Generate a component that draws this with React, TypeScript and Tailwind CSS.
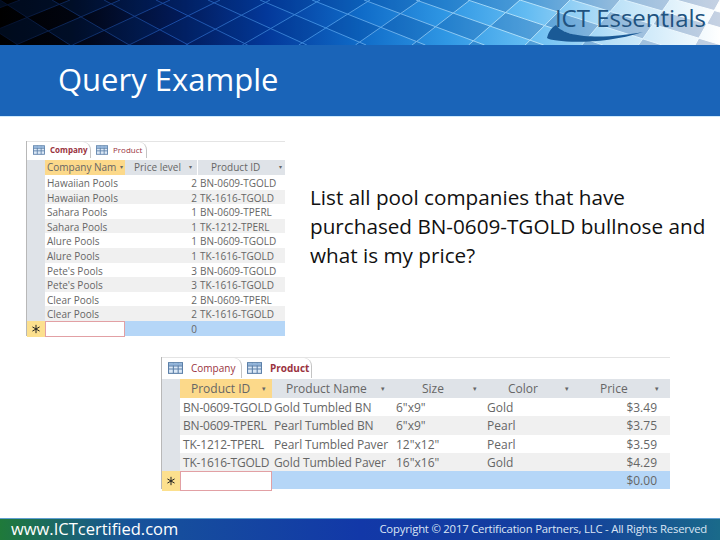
import React from "react";

// Two fanned families of grid lines; each line is x = top + (y / 45) * slant
const famA: [number, number][] = [];
for (let i = -6; i < 24; i++) {
  const t = i * 52;
  const r = Math.max(0, Math.min(1, t / 720));
  famA.push([t, 70 + r * 100]);
}
const famB: [number, number][] = [];
for (let i = -2; i < 30; i++) {
  const t = i * 50 + 20;
  const r = Math.max(0, Math.min(1, t / 720));
  famB.push([t, -120 + r * 95]);
}
const meet = (a: [number, number], b: [number, number]): [number, number] => {
  const y = ((b[0] - a[0]) / (a[1] - b[1])) * 45;
  return [a[0] + (y / 45) * a[1], y];
};
const linePath = [...famA, ...famB].map(([t, d]) => `M${t} 0 L${t + d} 45`).join(" ");
let cellPath = "";
for (let i = 0; i < famA.length - 1; i++) {
  for (let j = 0; j < famB.length - 1; j++) {
    if ((i + j) % 2) continue;
    const p = [meet(famA[i], famB[j]), meet(famA[i + 1], famB[j]), meet(famA[i + 1], famB[j + 1]), meet(famA[i], famB[j + 1])];
    cellPath += "M" + p.map((q) => `${q[0].toFixed(1)} ${q[1].toFixed(1)}`).join("L") + "Z";
  }
}

function Banner() {
  return (
    <div className="relative h-[45px] w-full overflow-hidden">
      <svg viewBox="0 0 720 45" className="block h-[45px] w-[720px]">
        <defs>
          <linearGradient id="bg" x1="0" y1="0" x2="720" y2="0" gradientUnits="userSpaceOnUse">
            <stop offset="0" stopColor="#000000" />
            <stop offset="0.1" stopColor="#01040f" />
            <stop offset="0.25" stopColor="#021a58" />
            <stop offset="0.37" stopColor="#03389a" />
            <stop offset="0.5" stopColor="#0f6bc8" />
            <stop offset="0.62" stopColor="#2f97e4" />
            <stop offset="0.73" stopColor="#62bbf2" />
            <stop offset="0.85" stopColor="#b9e0f7" />
            <stop offset="1" stopColor="#ffffff" />
          </linearGradient>
          <linearGradient id="ln" x1="0" y1="0" x2="720" y2="0" gradientUnits="userSpaceOnUse">
            <stop offset="0" stopColor="#040f28" />
            <stop offset="0.25" stopColor="#1a4ca6" />
            <stop offset="0.45" stopColor="#3f8fe0" />
            <stop offset="0.7" stopColor="#a8dcf8" />
            <stop offset="1" stopColor="#ffffff" />
          </linearGradient>
        </defs>
        <rect width="720" height="45" fill="url(#bg)" />
        <path d={cellPath} fill="#00307f" fillOpacity="0.22" />
        <path d={linePath} stroke="url(#ln)" strokeWidth="1" fill="none" />
        <path d="M547 38 C552 42 600 46 643 32 C612 38 566 40 556 25 C551 28 548 33 547 38 Z" fill="#1a5a96" />
      </svg>
      <div className="absolute right-[14px] top-0 font-['Open_Sans',sans-serif] text-[24px] leading-[36px] text-[#20527f]">
        ICT Essentials
      </div>
    </div>
  );
}

function GridIcon({ big }: { big?: boolean }) {
  return (
    <svg viewBox="0 0 14 11" className={big ? "h-[12px] w-[15px] shrink-0" : "h-[10px] w-[12px] shrink-0"}>
      <rect x="0.5" y="0.5" width="13" height="10" fill="#dbe8f6" stroke="#5b7fa8" />
      <path d="M0.5 3.5H13.5M0.5 6.5H13.5M5 0.5V10.5M9.5 0.5V10.5" stroke="#5b7fa8" />
      <rect x="1" y="1" width="12" height="2" fill="#8fb2d8" />
    </svg>
  );
}

function Star() {
  return (
    <svg viewBox="0 0 12 12" className="h-[10px] w-[10px]">
      <path d="M6 1V11M1.7 3.5L10.3 8.5M1.7 8.5L10.3 3.5" stroke="#222" strokeWidth="1.2" />
    </svg>
  );
}

function Tabs({ names, active, big }: { names: string[]; active: number; big?: boolean }) {
  const widths = big ? ["w-[79px]", "w-[70px]"] : ["w-[63px]", "w-[56px]"];
  return (
    <div className={big ? "flex h-[22px] items-start border-t border-[#e4e4e4] pl-[1px] text-[10px]" : "flex h-[19px] items-start border-t border-[#e4e4e4] pl-[1px] text-[8px]"}>
      {names.map((n, i) => (
        <div
          key={n}
          className={
            widths[i] +
            (big ? " h-[20px] gap-[8px] pl-[5px] " : " h-[16px] gap-[5px] pl-[5px] ") +
            "flex items-center whitespace-nowrap rounded-tr-[8px] border-r border-[#c4c4c4] text-[#9a3340]" +
            (i === active ? " font-bold" : "")
          }
        >
          <GridIcon big={big} />
          {n}
        </div>
      ))}
    </div>
  );
}

function Table1() {
  const cols = "grid-cols-[18px_80px_73px_87px]";
  const rows: [string, string, string][] = [
    ["Hawaiian Pools", "2", "BN-0609-TGOLD"],
    ["Hawaiian Pools", "2", "TK-1616-TGOLD"],
    ["Sahara Pools", "1", "BN-0609-TPERL"],
    ["Sahara Pools", "1", "TK-1212-TPERL"],
    ["Alure Pools", "1", "BN-0609-TGOLD"],
    ["Alure Pools", "1", "TK-1616-TGOLD"],
    ["Pete's Pools", "3", "BN-0609-TGOLD"],
    ["Pete's Pools", "3", "TK-1616-TGOLD"],
    ["Clear Pools", "2", "BN-0609-TPERL"],
    ["Clear Pools", "2", "TK-1616-TGOLD"],
  ];
  return (
    <div className="h-fit w-[259px] border-l border-[#b8b8b8] font-['Open_Sans',sans-serif] text-[10px] text-[#666]">
      <Tabs names={["Company", "Product"]} active={0} />
      <div className={"grid h-[15px] whitespace-nowrap bg-[#dfe3e8] leading-[15px] " + cols}>
        <div />
        <div className="flex items-center justify-between bg-[#fcd98a] px-[2px]">Company Nam <span className="text-[6px]">▾</span></div>
        <div className="flex items-center justify-between border-r border-white pl-[9px] pr-[5px]">Price level <span className="text-[6px]">▾</span></div>
        <div className="flex items-center justify-between pl-[13px] pr-[3px]">Product ID <span className="text-[6px]">▾</span></div>
      </div>
      {rows.map((r, i) => (
        <div
          key={i}
          className={
            "grid h-[14.6px] whitespace-nowrap leading-[16px] " + cols + " " +
            (i % 2 ? "bg-[#f0f0f0]" : "bg-white")
          }
        >
          <div className="border-b border-[#b9bec5] bg-[#dfe3e8]" />
          <div className="px-[2px]">{r[0]}</div>
          <div className="pr-[1px] text-right">{r[1]}</div>
          <div className="pl-[2px]">{r[2]}</div>
        </div>
      ))}
      <div className={"grid h-[15px] bg-[#b5d6f7] leading-[16px] " + cols}>
        <div className="flex items-center justify-center bg-[#fce08e]"><Star /></div>
        <div className="border border-[#e2a0a4] bg-white" />
        <div className="pr-[1px] text-right">0</div>
        <div />
      </div>
    </div>
  );
}

function Table2() {
  const cols = "grid-cols-[18px_92px_123px_90px_100px_85px]";
  const rows: [string, string, string, string, string][] = [
    ["BN-0609-TGOLD", "Gold Tumbled BN", '6"x9"', "Gold", "$3.49"],
    ["BN-0609-TPERL", "Pearl Tumbled BN", '6"x9"', "Pearl", "$3.75"],
    ["TK-1212-TPERL", "Pearl Tumbled Paver", '12"x12"', "Pearl", "$3.59"],
    ["TK-1616-TGOLD", "Gold Tumbled Paver", '16"x16"', "Gold", "$4.29"],
  ];
  return (
    <div className="h-fit w-[509px] border-l border-[#b8b8b8] font-['Open_Sans',sans-serif] text-[12px] text-[#666]">
      <Tabs names={["Company", "Product"]} active={1} big />
      <div className={"grid h-[19px] whitespace-nowrap bg-[#dfe3e8] leading-[19px] " + cols}>
        <div />
        <div className="flex items-center justify-between bg-[#fcd98a] pl-[11px] pr-[6px]">Product ID <span className="text-[7px]">▾</span></div>
        <div className="flex items-center justify-between pl-[14px] pr-[10px]">Product Name <span className="text-[7px]">▾</span></div>
        <div className="flex items-center justify-between pl-[27px] pr-[8px]">Size <span className="text-[7px]">▾</span></div>
        <div className="flex items-center justify-between pl-[23px] pr-[16px]">Color <span className="text-[7px]">▾</span></div>
        <div className="flex items-center justify-between pl-[15px] pr-[11px]">Price <span className="text-[7px]">▾</span></div>
      </div>
      {rows.map((r, i) => (
        <div key={i} className={"grid h-[18.3px] whitespace-nowrap leading-[20px] " + cols + (i % 2 ? " bg-[#f0f0f0]" : " bg-white")}>
          <div className="border-b border-[#b9bec5] bg-[#dfe3e8]" />
          <div className="pl-[3px] tracking-[-0.2px]">{r[0]}</div>
          <div className="pl-[2px] tracking-[-0.1px]">{r[1]}</div>
          <div className="pl-[1px]">{r[2]}</div>
          <div className="pl-[2px]">{r[3]}</div>
          <div className="pr-[13px] text-right">{r[4]}</div>
        </div>
      ))}
      <div className={"grid h-[18px] bg-[#b5d6f7] leading-[20px] " + cols}>
        <div className="flex items-center justify-center bg-[#fce08e]"><Star /></div>
        <div className="border border-[#e2a0a4] bg-white" />
        <div />
        <div />
        <div />
        <div className="pr-[13px] text-right">$0.00</div>
      </div>
    </div>
  );
}

export default function App() {
  return (
    <div className="flex h-[540px] w-[720px] flex-col overflow-hidden bg-white">
      <Banner />
      <div className="flex h-[72px] items-center border-b border-[#cfeafc] bg-[#1a64b8] pl-[58px] pb-[2px] font-['Open_Sans',sans-serif] text-[31px] text-white">
        Query Example
      </div>
      <div className="flex h-[240px] pl-[26px] pt-[24px]">
        <Table1 />
        <p className="ml-[25px] mt-[42px] whitespace-nowrap font-['Open_Sans',sans-serif] text-[20.7px] leading-[29px] text-[#111]">
          List all pool companies that have
          <br />
          purchased BN-0609-TGOLD bullnose and
          <br />
          what is my price?
        </p>
      </div>
      <div className="flex flex-1 pl-[161px]">
        <Table2 />
      </div>
      <div className="flex h-[22px] items-center justify-between border-t border-[#5f9fd0] bg-[linear-gradient(90deg,#1f7a3a_0%,#17539a_18%,#1238a8_50%,#14409c_80%,#1a6a8a_100%)] pl-[11px] pr-[13px] font-['Open_Sans',sans-serif] text-white">
        <span className="text-[16.5px]">www.ICTcertified.com</span>
        <span className="text-[11.3px] tracking-[-0.2px] text-[#dbe6f5]">Copyright © 2017 Certification Partners, LLC - All Rights Reserved</span>
      </div>
    </div>
  );
}
